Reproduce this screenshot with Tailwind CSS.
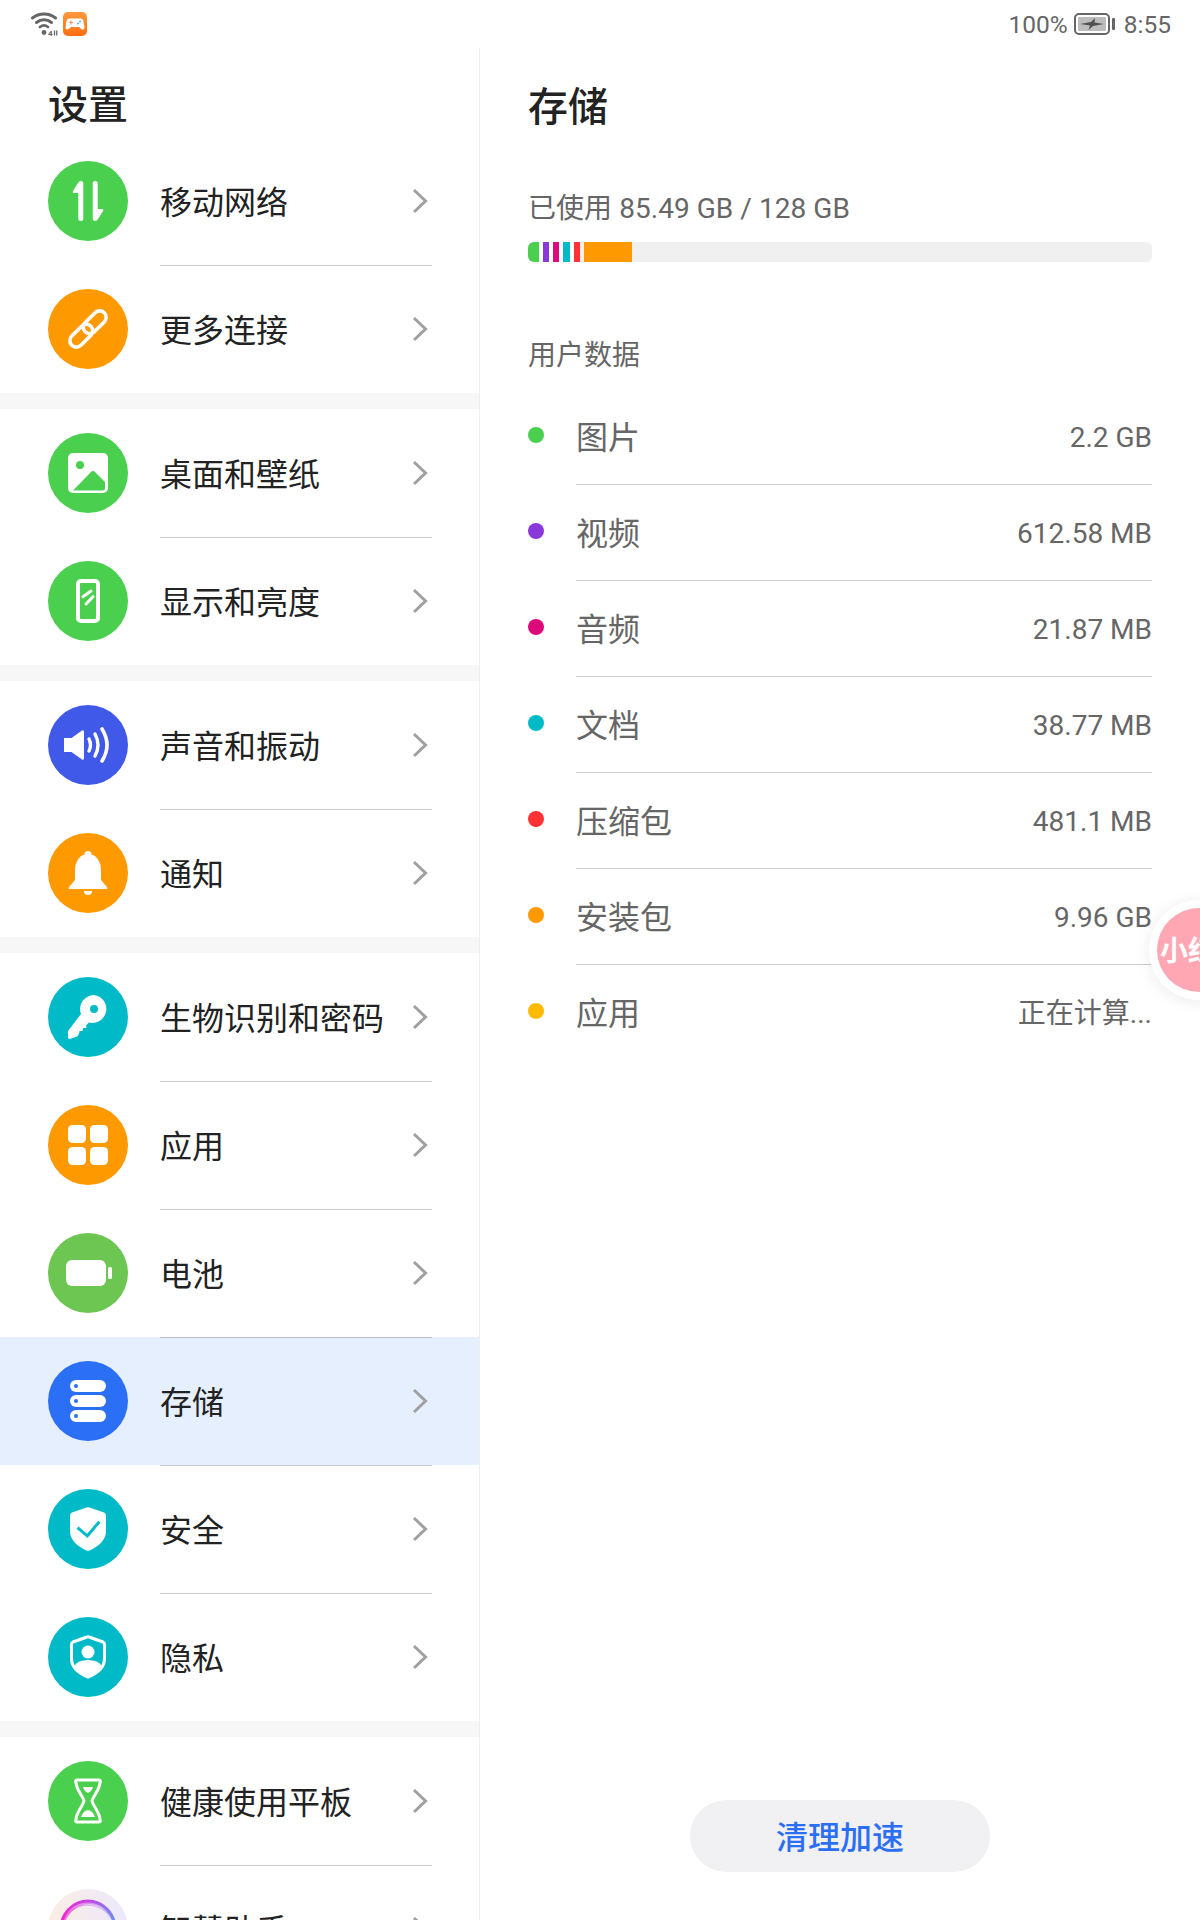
<!DOCTYPE html>
<html lang="zh-CN">
<head>
<meta charset="utf-8">
<title>设置 - 存储</title>
<script src="https://cdn.jsdelivr.net/npm/@tailwindcss/browser@4"></script>
</head>
<body class="bg-white">
<div class="relative w-[1200px] h-[1920px] overflow-hidden bg-white flex flex-col font-['Roboto','Noto_Sans_CJK_SC',sans-serif] text-[#222222]">

  <!-- status bar -->
  <div class="h-12 shrink-0 flex items-center justify-between pl-[31px] pr-[29px] text-[24.5px] text-[#666666]">
    <div class="flex items-center gap-[5px]">
      <svg width="27" height="24" viewBox="0 0 27 24" fill="none">
        <path d="M1.5 6 C8 0.5 18 0.5 24.5 6" stroke="#666" stroke-width="3" stroke-linecap="round"/>
        <path d="M5.5 10.5 C10 6.8 16 6.8 20.5 10.5" stroke="#666" stroke-width="3" stroke-linecap="round"/>
        <path d="M9 15 C11.5 13 14.5 13 17 15" stroke="#666" stroke-width="2.8" stroke-linecap="round"/>
        <circle cx="13" cy="20.5" r="2.4" fill="#666"/>
        <text x="17" y="23.5" font-size="8" font-weight="700" fill="#666" font-family="Roboto">4</text>
        <path d="M23.5 23.5 V18.5 M25.8 18.5 V23.5" stroke="#666" stroke-width="1.3"/>
      </svg>
      <svg width="24" height="24" viewBox="0 0 24 24">
        <defs><linearGradient id="g1" x1="0" y1="0" x2="0" y2="1"><stop offset="0" stop-color="#ff9a3c"/><stop offset="1" stop-color="#ff6d12"/></linearGradient></defs>
        <rect width="24" height="24" rx="5" fill="url(#g1)"/>
        <path d="M6.5 6.5 H17.5 Q20 6.5 20.5 9.5 L21.5 15 Q21.8 17.8 19.5 17.5 Q18 17.2 16 15 H8 Q6 17.2 4.5 17.5 Q2.2 17.8 2.5 15 L3.5 9.5 Q4 6.5 6.5 6.5Z" fill="#fff"/>
        <path d="M6 10.5 H10 M8 8.5 V12.5" stroke="#ff8f6a" stroke-width="1.2"/>
        <circle cx="15" cy="11.5" r="1" fill="#5ab0ee"/><circle cx="17" cy="9.5" r="1" fill="#5ab0ee"/>
      </svg>
    </div>
    <div class="flex items-center">
      <span class="mt-[2px]">100%</span>
      <svg class="ml-[6px]" width="41" height="22" viewBox="0 0 41 22" fill="none">
        <rect x="1" y="1" width="34" height="20" rx="4" stroke="#666" stroke-width="2"/>
        <rect x="4" y="4" width="28" height="14" rx="1" fill="#bdbdbd"/>
        <path d="M6 11 L17 9 L21 5 L20.5 9.5 L30 11 L19 13 L14.5 17 L16 12.5Z" fill="#505050"/>
        <rect x="38" y="5" width="3" height="12" rx="1" fill="#666"/>
      </svg>
      <span class="ml-[9px] mt-[2px]">8:55</span>
    </div>
  </div>

  <div class="flex flex-1 min-h-0">
    <!-- left list -->
    <div class="w-[480px] shrink-0 h-[1872px] overflow-hidden border-r border-[#eeeeee]">
      <div class="h-[89px] pl-12 pt-[34px] text-[40px] leading-[48px] font-medium">设置</div>

      <!-- section 1 -->
      <div class="flex items-center h-[128px] pl-12">
        <div class="w-20 h-20 shrink-0 rounded-full bg-[#4bcf4f]">
          <svg viewBox="0 0 80 80" class="w-20 h-20" fill="#fff"><path d="M33 20 Q35.3 20 35.3 23 V57.5 a2.5 2.5 0 0 1-5 0 V32 H26 Q24 32 25 30 L30 22 Q31 20 33 20z"/><path transform="rotate(180 40 40)" d="M33 20 Q35.3 20 35.3 23 V57.5 a2.5 2.5 0 0 1-5 0 V32 H26 Q24 32 25 30 L30 22 Q31 20 33 20z"/></svg>
        </div>
        <div class="ml-8 mr-[47px] flex-1 self-stretch flex items-center justify-between pr-1 text-[32px]">
          <span class="mt-[4px]">移动网络</span>
          <svg width="16" height="26" viewBox="0 0 16 26" fill="none"><path d="M2 2 L13.5 13 L2 24" stroke="#a0a0a0" stroke-width="3"/></svg>
        </div>
      </div>
      <div class="flex items-center h-[128px] pl-12">
        <div class="w-20 h-20 shrink-0 rounded-full bg-[#ff9900]">
          <svg viewBox="0 0 80 80" class="w-20 h-20" fill="none" stroke="#fff" stroke-width="3.6"><g transform="rotate(-45 40 40)"><rect x="17" y="33.5" width="27" height="13" rx="6.5"/><rect x="36" y="33.5" width="27" height="13" rx="6.5"/></g></svg>
        </div>
        <div class="ml-8 mr-[47px] flex-1 self-stretch flex items-center justify-between pr-1 text-[32px] shadow-[inset_0_1px_0_rgba(0,0,0,0.2)]">
          <span class="mt-[4px]">更多连接</span>
          <svg width="16" height="26" viewBox="0 0 16 26" fill="none"><path d="M2 2 L13.5 13 L2 24" stroke="#a0a0a0" stroke-width="3"/></svg>
        </div>
      </div>
      <div class="h-4 bg-[#f7f7f7]"></div>

      <!-- section 2 -->
      <div class="flex items-center h-[128px] pl-12">
        <div class="w-20 h-20 shrink-0 rounded-full bg-[#4bcf4f]">
          <svg viewBox="0 0 80 80" class="w-20 h-20"><rect x="20" y="20" width="40" height="40" rx="5" fill="#fff"/><circle cx="32" cy="32" r="4" fill="#4bcf4f"/><path d="M25 57.5 L43 39 Q45 37 47 39 L57 49 V55 Q57 57.5 54.5 57.5z" fill="#4bcf4f"/></svg>
        </div>
        <div class="ml-8 mr-[47px] flex-1 self-stretch flex items-center justify-between pr-1 text-[32px]">
          <span class="mt-[4px]">桌面和壁纸</span>
          <svg width="16" height="26" viewBox="0 0 16 26" fill="none"><path d="M2 2 L13.5 13 L2 24" stroke="#a0a0a0" stroke-width="3"/></svg>
        </div>
      </div>
      <div class="flex items-center h-[128px] pl-12">
        <div class="w-20 h-20 shrink-0 rounded-full bg-[#4bcf4f]">
          <svg viewBox="0 0 80 80" class="w-20 h-20" fill="none" stroke="#fff"><rect x="30" y="20" width="20" height="40" rx="3" stroke-width="4"/><path d="M35 35.7 L43 30 M38 43 L45 35.7" stroke-width="3" stroke-linecap="round"/></svg>
        </div>
        <div class="ml-8 mr-[47px] flex-1 self-stretch flex items-center justify-between pr-1 text-[32px] shadow-[inset_0_1px_0_rgba(0,0,0,0.2)]">
          <span class="mt-[4px]">显示和亮度</span>
          <svg width="16" height="26" viewBox="0 0 16 26" fill="none"><path d="M2 2 L13.5 13 L2 24" stroke="#a0a0a0" stroke-width="3"/></svg>
        </div>
      </div>
      <div class="h-4 bg-[#f7f7f7]"></div>

      <!-- section 3 -->
      <div class="flex items-center h-[128px] pl-12">
        <div class="w-20 h-20 shrink-0 rounded-full bg-[#4159e8]">
          <svg viewBox="0 0 80 80" class="w-20 h-20" fill="none" stroke="#fff" stroke-linecap="round"><path d="M16 33 H23.5 L34 25.5 Q36 24.5 36 27 V53 Q36 55.5 34 54.5 L23.5 47 H16z" fill="#fff" stroke="none"/><path d="M41 34 Q44 40 41 46" stroke-width="3.4"/><path d="M47 29 Q53 40 47 51" stroke-width="3.4"/><path d="M54 24 Q64 40 54 56" stroke-width="3.6"/></svg>
        </div>
        <div class="ml-8 mr-[47px] flex-1 self-stretch flex items-center justify-between pr-1 text-[32px]">
          <span class="mt-[4px]">声音和振动</span>
          <svg width="16" height="26" viewBox="0 0 16 26" fill="none"><path d="M2 2 L13.5 13 L2 24" stroke="#a0a0a0" stroke-width="3"/></svg>
        </div>
      </div>
      <div class="flex items-center h-[128px] pl-12">
        <div class="w-20 h-20 shrink-0 rounded-full bg-[#ff9900]">
          <svg viewBox="0 0 80 80" class="w-20 h-20" fill="#fff"><path d="M40 18 a3.5 3.5 0 0 1 3.5 3.5 Q52 24 53 36 V47 L59 54 Q60 56 58 56 H22 Q20 56 21 54 L27 47 V36 Q28 24 36.5 21.5 A3.5 3.5 0 0 1 40 18z"/><path d="M36 58 H44 A4 4 0 0 1 36 58z"/></svg>
        </div>
        <div class="ml-8 mr-[47px] flex-1 self-stretch flex items-center justify-between pr-1 text-[32px] shadow-[inset_0_1px_0_rgba(0,0,0,0.2)]">
          <span class="mt-[4px]">通知</span>
          <svg width="16" height="26" viewBox="0 0 16 26" fill="none"><path d="M2 2 L13.5 13 L2 24" stroke="#a0a0a0" stroke-width="3"/></svg>
        </div>
      </div>
      <div class="h-4 bg-[#f7f7f7]"></div>

      <!-- section 4 -->
      <div class="flex items-center h-[128px] pl-12">
        <div class="w-20 h-20 shrink-0 rounded-full bg-[#00bac8]">
          <svg viewBox="0 0 80 80" class="w-20 h-20"><path fill-rule="evenodd" fill="#fff" d="M46 18 A14 14 0 1 1 41 45.5 L38 48.5 L38.5 51 L35 51 L34.5 54 L31.5 54 L31 57 L29 59.5 L21.5 62 Q20 62 20 60 L20 54 L33 37 A14 14 0 0 1 46 18Z M46 28 A4 4 0 1 0 46 36 A4 4 0 1 0 46 28Z"/></svg>
        </div>
        <div class="ml-8 mr-[47px] flex-1 self-stretch flex items-center justify-between pr-1 text-[32px]">
          <span class="mt-[4px]">生物识别和密码</span>
          <svg width="16" height="26" viewBox="0 0 16 26" fill="none"><path d="M2 2 L13.5 13 L2 24" stroke="#a0a0a0" stroke-width="3"/></svg>
        </div>
      </div>
      <div class="flex items-center h-[128px] pl-12">
        <div class="w-20 h-20 shrink-0 rounded-full bg-[#ff9900]">
          <svg viewBox="0 0 80 80" class="w-20 h-20" fill="#fff"><rect x="20" y="20" width="18" height="18" rx="4.5"/><rect x="42" y="20" width="18" height="18" rx="4.5"/><rect x="20" y="42" width="18" height="18" rx="4.5"/><rect x="42" y="42" width="18" height="18" rx="4.5"/></svg>
        </div>
        <div class="ml-8 mr-[47px] flex-1 self-stretch flex items-center justify-between pr-1 text-[32px] shadow-[inset_0_1px_0_rgba(0,0,0,0.2)]">
          <span class="mt-[4px]">应用</span>
          <svg width="16" height="26" viewBox="0 0 16 26" fill="none"><path d="M2 2 L13.5 13 L2 24" stroke="#a0a0a0" stroke-width="3"/></svg>
        </div>
      </div>
      <div class="flex items-center h-[128px] pl-12">
        <div class="w-20 h-20 shrink-0 rounded-full bg-[#6cc651]">
          <svg viewBox="0 0 80 80" class="w-20 h-20" fill="#fff"><rect x="18" y="27" width="40" height="26" rx="6"/><rect x="60" y="34" width="4" height="12" rx="1.5"/></svg>
        </div>
        <div class="ml-8 mr-[47px] flex-1 self-stretch flex items-center justify-between pr-1 text-[32px] shadow-[inset_0_1px_0_rgba(0,0,0,0.2)]">
          <span class="mt-[4px]">电池</span>
          <svg width="16" height="26" viewBox="0 0 16 26" fill="none"><path d="M2 2 L13.5 13 L2 24" stroke="#a0a0a0" stroke-width="3"/></svg>
        </div>
      </div>
      <div class="flex items-center h-[128px] pl-12 bg-[#e6effd]">
        <div class="w-20 h-20 shrink-0 rounded-full bg-[#2a6ff5]">
          <svg viewBox="0 0 80 80" class="w-20 h-20"><rect x="22" y="19" width="36" height="12" rx="6" fill="#fff"/><rect x="22" y="34" width="36" height="12" rx="6" fill="#fff"/><rect x="22" y="49" width="36" height="12" rx="6" fill="#fff"/><circle cx="28" cy="25" r="2" fill="#2a6ff5"/><circle cx="28" cy="40" r="2" fill="#2a6ff5"/><circle cx="28" cy="55" r="2" fill="#2a6ff5"/></svg>
        </div>
        <div class="ml-8 mr-[47px] flex-1 self-stretch flex items-center justify-between pr-1 text-[32px] shadow-[inset_0_1px_0_rgba(0,0,0,0.2)]">
          <span class="mt-[4px]">存储</span>
          <svg width="16" height="26" viewBox="0 0 16 26" fill="none"><path d="M2 2 L13.5 13 L2 24" stroke="#a0a0a0" stroke-width="3"/></svg>
        </div>
      </div>
      <div class="flex items-center h-[128px] pl-12">
        <div class="w-20 h-20 shrink-0 rounded-full bg-[#00bac8]">
          <svg viewBox="0 0 80 80" class="w-20 h-20"><path d="M38.5 18.5 Q40 18 41.5 18.5 L56 23.5 Q58 24.5 58 26.5 V42 Q58 54 41.5 61.5 Q40 62 38.5 61.5 Q22 54 22 42 V26.5 Q22 24.5 24 23.5Z" fill="#fff"/><path d="M29.5 38.7 L39.3 47 L51.3 32.7" fill="none" stroke="#00bac8" stroke-width="3"/></svg>
        </div>
        <div class="ml-8 mr-[47px] flex-1 self-stretch flex items-center justify-between pr-1 text-[32px] shadow-[inset_0_1px_0_rgba(0,0,0,0.2)]">
          <span class="mt-[4px]">安全</span>
          <svg width="16" height="26" viewBox="0 0 16 26" fill="none"><path d="M2 2 L13.5 13 L2 24" stroke="#a0a0a0" stroke-width="3"/></svg>
        </div>
      </div>
      <div class="flex items-center h-[128px] pl-12">
        <div class="w-20 h-20 shrink-0 rounded-full bg-[#00bac8]">
          <svg viewBox="0 0 80 80" class="w-20 h-20"><path d="M39 20 Q40 19.5 41 20 L55 25 Q56.5 25.8 56.5 27.5 V42 Q56.5 53 40.5 60 Q40 60.2 39.5 60 Q23.5 53 23.5 42 V27.5 Q23.5 25.8 25 25Z" fill="none" stroke="#fff" stroke-width="3"/><circle cx="40" cy="35" r="6.5" fill="#fff"/><path d="M26 49 Q30 43 40 43 Q50 43 54 49 Q50 56 40 61 Q30 56 26 49z" fill="#fff"/></svg>
        </div>
        <div class="ml-8 mr-[47px] flex-1 self-stretch flex items-center justify-between pr-1 text-[32px] shadow-[inset_0_1px_0_rgba(0,0,0,0.2)]">
          <span class="mt-[4px]">隐私</span>
          <svg width="16" height="26" viewBox="0 0 16 26" fill="none"><path d="M2 2 L13.5 13 L2 24" stroke="#a0a0a0" stroke-width="3"/></svg>
        </div>
      </div>
      <div class="h-4 bg-[#f7f7f7]"></div>

      <!-- section 5 -->
      <div class="flex items-center h-[128px] pl-12">
        <div class="w-20 h-20 shrink-0 rounded-full bg-[#4bcf4f]">
          <svg viewBox="0 0 80 80" class="w-20 h-20"><path d="M29 19 H51 Q53 19 52 22 C51 30 45 35 44 40 C45 45 51 50 52 58 Q53 61 51 61 H29 Q27 61 28 58 C29 50 35 45 36 40 C35 35 29 30 28 22 Q27 19 29 19Z" fill="none" stroke="#fff" stroke-width="3"/><path d="M35 26 H45 Q44 30 40 32 Q36 30 35 26Z" fill="#fff"/><path d="M33 56 H47 Q45 50 40 49 Q35 50 33 56Z" fill="#fff"/></svg>
        </div>
        <div class="ml-8 mr-[47px] flex-1 self-stretch flex items-center justify-between pr-1 text-[32px]">
          <span class="mt-[4px]">健康使用平板</span>
          <svg width="16" height="26" viewBox="0 0 16 26" fill="none"><path d="M2 2 L13.5 13 L2 24" stroke="#a0a0a0" stroke-width="3"/></svg>
        </div>
      </div>
      <div class="flex items-center h-[128px] pl-12">
        <div class="w-20 h-20 shrink-0 rounded-full bg-gradient-to-r from-[#fbeee2] to-[#ebe8fd]">
          <svg viewBox="0 0 80 80" class="w-20 h-20" fill="none">
            <defs><linearGradient id="g2" x1="0" y1="0" x2="1" y2="0"><stop offset="0" stop-color="#f026d0"/><stop offset="0.55" stop-color="#c24ae8"/><stop offset="1" stop-color="#6f8cf5"/></linearGradient></defs>
            <ellipse cx="40" cy="40" rx="27" ry="28" stroke="url(#g2)" stroke-width="3"/>
            <ellipse cx="41" cy="42" rx="26" ry="28" stroke="url(#g2)" stroke-width="2" opacity="0.55"/>
            <ellipse cx="40" cy="43" rx="27" ry="27" stroke="url(#g2)" stroke-width="1.5" opacity="0.35"/>
          </svg>
        </div>
        <div class="ml-8 mr-[47px] flex-1 self-stretch flex items-center justify-between pr-1 text-[32px] shadow-[inset_0_1px_0_rgba(0,0,0,0.2)]">
          <span class="mt-[4px]">智慧助手</span>
          <svg width="16" height="26" viewBox="0 0 16 26" fill="none"><path d="M2 2 L13.5 13 L2 24" stroke="#a0a0a0" stroke-width="3"/></svg>
        </div>
      </div>
    </div>

    <!-- right detail -->
    <div class="flex-1 px-12 flex flex-col h-[1872px]">
      <div class="h-[48px] mt-[36px] text-[40px] leading-[48px] font-medium">存储</div>
      <div class="mt-[59px] h-9 leading-9 text-[28px] tracking-[0.05px] text-[#666666]">已使用 85.49 GB / 128 GB</div>
      <div class="mt-[15px] h-5 shrink-0 flex rounded-md overflow-hidden bg-[#f0f0f0]">
        <div class="w-[11px] bg-[#4bcf4f]"></div><div class="w-1 bg-white"></div>
        <div class="w-[6px] bg-[#8a38d8]"></div><div class="w-1 bg-white"></div>
        <div class="w-[6px] bg-[#dd0a7a]"></div><div class="w-1 bg-white"></div>
        <div class="w-[7px] bg-[#00bac8]"></div><div class="w-1 bg-white"></div>
        <div class="w-[6px] bg-[#ff3333]"></div><div class="w-1 bg-[#fdeee8]"></div>
        <div class="w-[48px] bg-[#ff9900]"></div>
      </div>
      <div class="mt-[76px] h-9 leading-9 text-[28px] text-[#666666]">用户数据</div>
      <div class="mt-[14px] flex flex-col text-[#666666]">
        <div class="flex items-center h-24">
          <div class="w-4 h-4 shrink-0 rounded-full bg-[#4bcf4f] -translate-y-px"></div>
          <div class="ml-8 flex-1 self-stretch flex items-center justify-between"><span class="text-[32px] mt-[4px]">图片</span><span class="text-[28px] mt-[4px]">2.2 GB</span></div>
        </div>
        <div class="flex items-center h-24">
          <div class="w-4 h-4 shrink-0 rounded-full bg-[#8a38d8] -translate-y-px"></div>
          <div class="ml-8 flex-1 self-stretch flex items-center justify-between shadow-[inset_0_1px_0_rgba(0,0,0,0.2)]"><span class="text-[32px] mt-[4px]">视频</span><span class="text-[28px] mt-[4px]">612.58 MB</span></div>
        </div>
        <div class="flex items-center h-24">
          <div class="w-4 h-4 shrink-0 rounded-full bg-[#dd0a7a] -translate-y-px"></div>
          <div class="ml-8 flex-1 self-stretch flex items-center justify-between shadow-[inset_0_1px_0_rgba(0,0,0,0.2)]"><span class="text-[32px] mt-[4px]">音频</span><span class="text-[28px] mt-[4px]">21.87 MB</span></div>
        </div>
        <div class="flex items-center h-24">
          <div class="w-4 h-4 shrink-0 rounded-full bg-[#00bac8] -translate-y-px"></div>
          <div class="ml-8 flex-1 self-stretch flex items-center justify-between shadow-[inset_0_1px_0_rgba(0,0,0,0.2)]"><span class="text-[32px] mt-[4px]">文档</span><span class="text-[28px] mt-[4px]">38.77 MB</span></div>
        </div>
        <div class="flex items-center h-24">
          <div class="w-4 h-4 shrink-0 rounded-full bg-[#ff3333] -translate-y-px"></div>
          <div class="ml-8 flex-1 self-stretch flex items-center justify-between shadow-[inset_0_1px_0_rgba(0,0,0,0.2)]"><span class="text-[32px] mt-[4px]">压缩包</span><span class="text-[28px] mt-[4px]">481.1 MB</span></div>
        </div>
        <div class="flex items-center h-24">
          <div class="w-4 h-4 shrink-0 rounded-full bg-[#ff9900] -translate-y-px"></div>
          <div class="ml-8 flex-1 self-stretch flex items-center justify-between shadow-[inset_0_1px_0_rgba(0,0,0,0.2)]"><span class="text-[32px] mt-[4px]">安装包</span><span class="text-[28px] mt-[4px]">9.96 GB</span></div>
        </div>
        <div class="flex items-center h-24">
          <div class="w-4 h-4 shrink-0 rounded-full bg-[#ffbb00] -translate-y-px"></div>
          <div class="ml-8 flex-1 self-stretch flex items-center justify-between shadow-[inset_0_1px_0_rgba(0,0,0,0.2)]"><span class="text-[32px] mt-[4px]">应用</span><span class="text-[28px] mt-[4px]">正在计算...</span></div>
        </div>
      </div>
      <div class="mt-auto mb-12 self-center w-[300px] h-[72px] rounded-full bg-[#f1f1f3] flex items-center justify-center text-[32px] font-medium text-[#2a6ff5]"><span class="mt-[4px]">清理加速</span></div>
    </div>
  </div>

  <!-- floating bubble -->
  <div class="absolute left-[1149px] top-[900px] w-[100px] h-[100px] rounded-full bg-white shadow-[0_2px_16px_rgba(0,0,0,0.08)] flex items-center justify-center">
    <div class="w-[84px] h-[84px] rounded-full bg-[#ffa8b4] flex items-center pl-[3px] text-[28px] font-bold text-white whitespace-nowrap overflow-hidden"><span class="mt-[4px]">小红书</span></div>
  </div>
</div>
</body>
</html>
